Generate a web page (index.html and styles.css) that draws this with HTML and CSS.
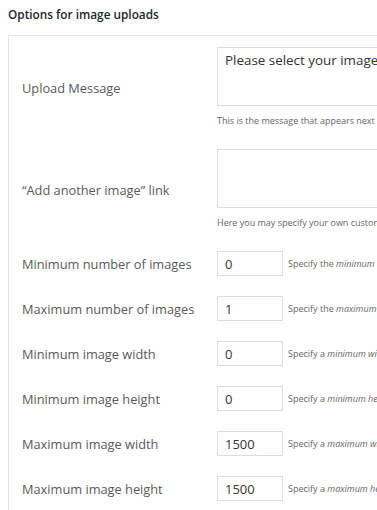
FILE: index.html
```html
<!DOCTYPE html>
<html lang="en">
<head>
    <meta charset="UTF-8">
    <meta name="viewport" content="width=device-width, initial-scale=1.0">
    <title>Image Upload Options</title>
    <link rel="stylesheet" href="styles.css">
</head>
<body>
    <h3 class="section-title">Options for image uploads</h3>

    <div class="panel">
        <div class="row">
            <label for="upload_message">Upload Message</label>
            <div class="field">
                <textarea id="upload_message" class="wide">Please select your image(s) to upload.</textarea>
                <p class="help">This is the message that appears next to the upload field on the front end form.</p>
            </div>
        </div>

        <div class="row">
            <label for="add_another">“Add another image” link</label>
            <div class="field">
                <textarea id="add_another" class="wide"></textarea>
                <p class="help">Here you may specify your own custom text for the link that adds another image field.</p>
            </div>
        </div>

        <div class="row">
            <label for="min_images">Minimum number of images</label>
            <div class="field inline">
                <input type="text" id="min_images" value="0">
                <span class="help">Specify the <em>minimum</em> number of images that must be uploaded.</span>
            </div>
        </div>

        <div class="row">
            <label for="max_images">Maximum number of images</label>
            <div class="field inline">
                <input type="text" id="max_images" value="1">
                <span class="help">Specify the <em>maximum</em> number of images that may be uploaded.</span>
            </div>
        </div>

        <div class="row">
            <label for="min_width">Minimum image width</label>
            <div class="field inline">
                <input type="text" id="min_width" value="0">
                <span class="help">Specify a <em>minimum width</em> in pixels for uploaded images.</span>
            </div>
        </div>

        <div class="row">
            <label for="min_height">Minimum image height</label>
            <div class="field inline">
                <input type="text" id="min_height" value="0">
                <span class="help">Specify a <em>minimum height</em> in pixels for uploaded images.</span>
            </div>
        </div>

        <div class="row">
            <label for="max_width">Maximum image width</label>
            <div class="field inline">
                <input type="text" id="max_width" value="1500">
                <span class="help">Specify a <em>maximum width</em> in pixels for uploaded images.</span>
            </div>
        </div>

        <div class="row">
            <label for="max_height">Maximum image height</label>
            <div class="field inline">
                <input type="text" id="max_height" value="1500">
                <span class="help">Specify a <em>maximum height</em> in pixels for uploaded images.</span>
            </div>
        </div>
    </div>
</body>
</html>
```

FILE: styles.css
```css
html, body {
    overflow: hidden;
}
body {
    font-family: "Open Sans", sans-serif;
    margin: 0;
    padding: 0 0 0 8px;
    color: #444;
    background: #fff;
}
.section-title {
    font-size: 11.8px;
    font-weight: 600;
    color: #23282d;
    margin: 0;
    padding: 5px 0 0;
    line-height: 18px;
    height: 30px;
}
.panel {
    width: 760px;
    border: 1px solid #e5e5e5;
    padding-top: 1px;
}
.row {
    display: grid;
    grid-template-columns: 195px 1fr;
    align-items: center;
    padding: 10px 0 10px 13px;
}
.row label {
    font-size: 12.8px;
    color: #5a5a5a;
}
.field.inline {
    display: flex;
    align-items: center;
    gap: 5px;
    white-space: nowrap;
}
textarea, input {
    font-family: "Open Sans", sans-serif;
    font-size: 13px;
    color: #333;
    border: 1px solid #ddd;
    box-sizing: border-box;
    border-radius: 0;
    background: #fff;
    margin: 0;
}
textarea.wide {
    display: block;
    width: 500px;
    height: 59px;
    padding: 3px 7px;
    font-size: 13.4px;
    resize: none;
}
input {
    width: 66px;
    height: 25px;
    padding: 0 7px;
}
.help {
    font-size: 9px;
    color: #666;
    line-height: 12px;
    white-space: nowrap;
}
p.help {
    margin: 9px 0 2px;
}
```
